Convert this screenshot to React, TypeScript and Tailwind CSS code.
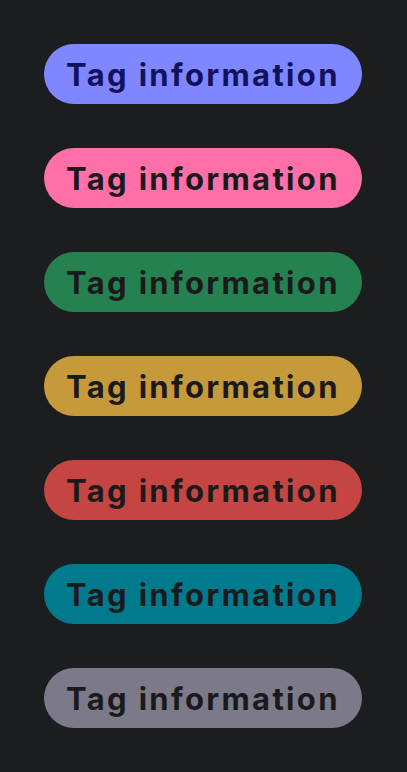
const tags = [
  { bg: 'bg-[#7e87ff]', text: 'text-[#12125c]' },
  { bg: 'bg-[#ff6fa8]', text: 'text-[#1a1a1d]' },
  { bg: 'bg-[#268150]', text: 'text-[#1a1a1d]' },
  { bg: 'bg-[#c6993a]', text: 'text-[#1a1a1d]' },
  { bg: 'bg-[#c44541]', text: 'text-[#1a1a1d]' },
  { bg: 'bg-[#007b8d]', text: 'text-[#1a1a1d]' },
  { bg: 'bg-[#7c7a88]', text: 'text-[#1a1a1d]' },
]

export default function App() {
  return (
    <div className="min-h-[772px] w-full bg-[#1c1d1f] pt-[44px] pl-[44px] font-['Inter','Liberation_Sans',sans-serif]">
      <div className="flex flex-col items-start gap-[44px]">
        {tags.map((t, i) => (
          <div
            key={i}
            className={`${t.bg} ${t.text} h-[60px] w-[318px] rounded-full flex items-center pl-[22px] text-[31px] font-bold leading-none tracking-[0.075em]`}
          >
            Tag information
          </div>
        ))}
      </div>
    </div>
  )
}
